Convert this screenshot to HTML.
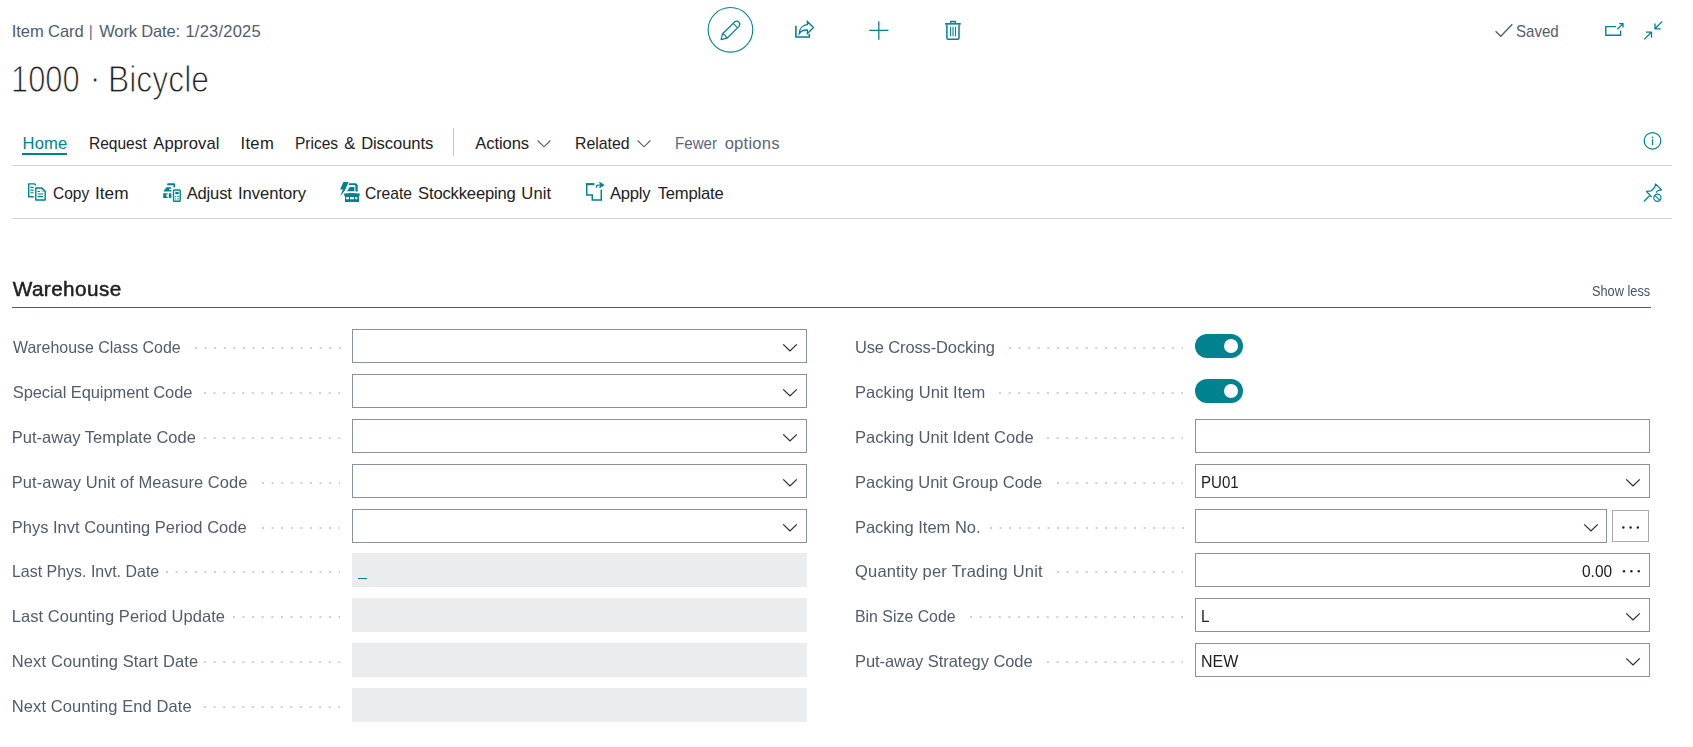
<!DOCTYPE html>
<html><head><meta charset="utf-8"><title>Item Card</title>
<style>
html,body{margin:0;padding:0;background:#fff;}
body{width:1693px;height:747px;position:relative;overflow:hidden;font-family:"Liberation Sans",sans-serif;}
.t{position:absolute;white-space:pre;line-height:1;font-family:"Liberation Sans",sans-serif;}
.a{position:absolute;}
.gl{position:absolute;left:0;top:0;width:1693px;height:747px;will-change:transform;}
.ln{position:absolute;height:1px;}
.inp{position:absolute;height:34px;box-sizing:border-box;border:1px solid #8a92a1;background:#fff;}
.ro{position:absolute;height:34px;background:#ebecee;}
.btn{position:absolute;width:37px;height:32px;box-sizing:border-box;border:1px solid #a6a8ab;background:#fff;}
.tog{position:absolute;width:48px;height:24px;border-radius:12px;background:#00838f;}
.tog i{position:absolute;left:29px;top:5px;width:14px;height:14px;border-radius:50%;background:#fff;}
.dots{position:absolute;height:2px;background-image:radial-gradient(circle at 1px 1px,#cbcfd4 1.05px,rgba(203,207,212,0) 1.5px);background-size:9.6px 2px;background-repeat:repeat-x;}
</style></head><body>
<div class="a" style="left:22px;top:153px;width:45px;height:2px;background:#00838f"></div>
<div class="ln" style="left:12px;top:165px;width:1660px;background:#d0d3d7"></div>
<div class="ln" style="left:12px;top:218px;width:1660px;background:#d1d4d7"></div>
<div class="a" style="left:453px;top:128px;width:1px;height:28px;background:#c4c7cb"></div>
<div class="ln" style="left:12px;top:307px;width:1639px;background:#505c6d"></div>
<div class="dots" style="left:194.50px;top:347.00px;width:146.00px"></div>
<div class="dots" style="left:204.10px;top:392.00px;width:136.40px"></div>
<div class="dots" style="left:204.10px;top:437.00px;width:136.40px"></div>
<div class="dots" style="left:261.70px;top:482.00px;width:78.80px"></div>
<div class="dots" style="left:261.70px;top:527.00px;width:78.80px"></div>
<div class="dots" style="left:165.70px;top:571.00px;width:174.80px"></div>
<div class="dots" style="left:232.90px;top:616.00px;width:107.60px"></div>
<div class="dots" style="left:204.10px;top:661.00px;width:136.40px"></div>
<div class="dots" style="left:204.10px;top:706.00px;width:136.40px"></div>
<div class="dots" style="left:1008.70px;top:347.00px;width:174.80px"></div>
<div class="dots" style="left:999.10px;top:392.00px;width:184.40px"></div>
<div class="dots" style="left:1047.10px;top:437.00px;width:136.40px"></div>
<div class="dots" style="left:1056.70px;top:482.00px;width:126.80px"></div>
<div class="dots" style="left:989.50px;top:527.00px;width:194.00px"></div>
<div class="dots" style="left:1056.70px;top:571.00px;width:126.80px"></div>
<div class="dots" style="left:970.30px;top:616.00px;width:213.20px"></div>
<div class="dots" style="left:1047.10px;top:661.00px;width:136.40px"></div>
<div class="inp" style="left:352px;top:329px;width:455px"></div>
<svg class="a" style="left:782.2px;top:343.2px" width="16" height="10" viewBox="0 0 16 10"><path d="M1.2 1.4 L8 8 L14.8 1.4" fill="none" stroke="#2b2b2b" stroke-width="1.25"/></svg>
<div class="inp" style="left:352px;top:374px;width:455px"></div>
<svg class="a" style="left:782.2px;top:388.2px" width="16" height="10" viewBox="0 0 16 10"><path d="M1.2 1.4 L8 8 L14.8 1.4" fill="none" stroke="#2b2b2b" stroke-width="1.25"/></svg>
<div class="inp" style="left:352px;top:419px;width:455px"></div>
<svg class="a" style="left:782.2px;top:433.2px" width="16" height="10" viewBox="0 0 16 10"><path d="M1.2 1.4 L8 8 L14.8 1.4" fill="none" stroke="#2b2b2b" stroke-width="1.25"/></svg>
<div class="inp" style="left:352px;top:464px;width:455px"></div>
<svg class="a" style="left:782.2px;top:478.2px" width="16" height="10" viewBox="0 0 16 10"><path d="M1.2 1.4 L8 8 L14.8 1.4" fill="none" stroke="#2b2b2b" stroke-width="1.25"/></svg>
<div class="inp" style="left:352px;top:509px;width:455px"></div>
<svg class="a" style="left:782.2px;top:523.2px" width="16" height="10" viewBox="0 0 16 10"><path d="M1.2 1.4 L8 8 L14.8 1.4" fill="none" stroke="#2b2b2b" stroke-width="1.25"/></svg>
<div class="ro" style="left:352px;top:553px;width:455px"></div>
<div class="ro" style="left:352px;top:598px;width:455px"></div>
<div class="ro" style="left:352px;top:643px;width:455px"></div>
<div class="ro" style="left:352px;top:688px;width:455px"></div>
<div class="a" style="left:357.8px;top:577.6px;width:9.3px;height:1.4px;background:#00838f"></div>
<div class="tog" style="left:1195px;top:334px"><i></i></div>
<div class="tog" style="left:1195px;top:379px"><i></i></div>
<div class="inp" style="left:1195px;top:419px;width:455px"></div>
<div class="inp" style="left:1195px;top:464px;width:455px"></div>
<svg class="a" style="left:1625.1px;top:478.2px" width="16" height="10" viewBox="0 0 16 10"><path d="M1.2 1.4 L8 8 L14.8 1.4" fill="none" stroke="#2b2b2b" stroke-width="1.25"/></svg>
<div class="inp" style="left:1195px;top:509px;width:412px"></div>
<svg class="a" style="left:1583.1px;top:523.2px" width="16" height="10" viewBox="0 0 16 10"><path d="M1.2 1.4 L8 8 L14.8 1.4" fill="none" stroke="#2b2b2b" stroke-width="1.25"/></svg>
<div class="btn" style="left:1612px;top:510px"></div>
<svg class="a" style="left:1618px;top:523px" width="24" height="8" viewBox="0 0 24 8"><circle cx="5.35" cy="4.50" r="1.2" fill="#222"/><circle cx="12.60" cy="4.50" r="1.2" fill="#222"/><circle cx="19.85" cy="4.50" r="1.2" fill="#222"/></svg>
<div class="inp" style="left:1195px;top:553px;width:455px"></div>
<svg class="a" style="left:1619px;top:567px" width="24" height="8" viewBox="0 0 24 8"><circle cx="5.00" cy="4.30" r="1.2" fill="#222"/><circle cx="12.40" cy="4.30" r="1.2" fill="#222"/><circle cx="19.80" cy="4.30" r="1.2" fill="#222"/></svg>
<div class="inp" style="left:1195px;top:598px;width:455px"></div>
<svg class="a" style="left:1625.1px;top:612.2px" width="16" height="10" viewBox="0 0 16 10"><path d="M1.2 1.4 L8 8 L14.8 1.4" fill="none" stroke="#2b2b2b" stroke-width="1.25"/></svg>
<div class="inp" style="left:1195px;top:643px;width:455px"></div>
<svg class="a" style="left:1625.1px;top:657.2px" width="16" height="10" viewBox="0 0 16 10"><path d="M1.2 1.4 L8 8 L14.8 1.4" fill="none" stroke="#2b2b2b" stroke-width="1.25"/></svg>
<span class="t" style="left:11.75px;top:23.00px;font-size:16.5px;letter-spacing:-0.064px;color:#505c6d;">Item Card</span>
<span class="t" style="left:89.12px;top:23.00px;font-size:16.5px;color:#505c6d;transform-origin:0 0;transform:scaleX(0.8250);">|</span>
<span class="t" style="left:99.25px;top:23.00px;font-size:16.5px;letter-spacing:-0.154px;color:#505c6d;">Work Date:</span>
<span class="t" style="left:185.45px;top:23.00px;font-size:16.5px;letter-spacing:0.228px;color:#505c6d;">1/23/2025</span>
<span class="t" style="left:11.06px;top:62.00px;font-size:36.6px;color:#212121;transform-origin:0 0;transform:scaleX(0.8439);-webkit-text-stroke:1.0px #fff;">1000</span>
<span class="t" style="left:88.95px;top:60.00px;font-size:36.6px;color:#212121;transform-origin:0 0;transform:scaleX(1.0000);-webkit-text-stroke:1.0px #fff;">·</span>
<span class="t" style="left:107.73px;top:62.00px;font-size:36.6px;color:#212121;transform-origin:0 0;transform:scaleX(0.8721);-webkit-text-stroke:1.0px #fff;">Bicycle</span>
<span class="t" style="left:22.55px;top:136.00px;font-size:16.6px;letter-spacing:0.138px;color:#00838f;">Home</span>
<span class="t" style="left:88.71px;top:136.00px;font-size:16.6px;color:#212121;transform-origin:0 0;transform:scaleX(0.9355);">Request</span>
<span class="t" style="left:153.35px;top:136.00px;font-size:16.6px;letter-spacing:0.078px;color:#212121;">Approval</span>
<span class="t" style="left:240.55px;top:136.00px;font-size:16.6px;letter-spacing:0.300px;color:#212121;">Item</span>
<span class="t" style="left:295.02px;top:136.00px;font-size:16.6px;color:#212121;transform-origin:0 0;transform:scaleX(0.9340);">Prices</span>
<span class="t" style="left:344.25px;top:136.00px;font-size:16.6px;letter-spacing:0.000px;color:#212121;">&amp;</span>
<span class="t" style="left:361.15px;top:136.00px;font-size:16.6px;letter-spacing:-0.101px;color:#212121;">Discounts</span>
<span class="t" style="left:475.35px;top:136.00px;font-size:16.6px;letter-spacing:-0.111px;color:#212121;">Actions</span>
<span class="t" style="left:574.79px;top:136.00px;font-size:16.6px;color:#212121;transform-origin:0 0;transform:scaleX(0.9550);">Related</span>
<span class="t" style="left:675.24px;top:136.00px;font-size:16.6px;color:#5c6677;transform-origin:0 0;transform:scaleX(0.9116);">Fewer</span>
<span class="t" style="left:724.65px;top:136.00px;font-size:16.6px;letter-spacing:0.223px;color:#5c6677;">options</span>
<span class="t" style="left:53.25px;top:186.00px;font-size:16.6px;color:#212121;transform-origin:0 0;transform:scaleX(0.9343);">Copy</span>
<span class="t" style="left:95.21px;top:186.00px;font-size:16.6px;color:#212121;transform-origin:0 0;transform:scaleX(1.0394);">Item</span>
<span class="t" style="left:186.65px;top:186.00px;font-size:16.6px;letter-spacing:-0.172px;color:#212121;">Adjust</span>
<span class="t" style="left:237.95px;top:186.00px;font-size:16.6px;letter-spacing:-0.013px;color:#212121;">Inventory</span>
<span class="t" style="left:365.45px;top:186.00px;font-size:16.6px;color:#212121;transform-origin:0 0;transform:scaleX(0.9430);">Create</span>
<span class="t" style="left:418.05px;top:186.00px;font-size:16.6px;letter-spacing:-0.168px;color:#212121;">Stockkeeping</span>
<span class="t" style="left:521.35px;top:186.00px;font-size:16.6px;letter-spacing:0.050px;color:#212121;">Unit</span>
<span class="t" style="left:609.95px;top:186.00px;font-size:16.6px;letter-spacing:-0.240px;color:#212121;">Apply</span>
<span class="t" style="left:657.65px;top:186.00px;font-size:16.6px;letter-spacing:-0.193px;color:#212121;">Template</span>
<span class="t" style="left:1516.35px;top:24.00px;font-size:16.6px;color:#505c6d;transform-origin:0 0;transform:scaleX(0.9088);">Saved</span>
<div class="gl">
<span class="t" style="left:12.75px;top:279.00px;font-size:20.7px;letter-spacing:0.429px;color:#212121;-webkit-text-stroke:0.5px #212121;">Warehouse</span>
<span class="t" style="left:1592.45px;top:285.00px;font-size:13.9px;color:#44516a;transform-origin:0 0;transform:scaleX(0.9193);">Show less</span>
<span class="t" style="left:12.75px;top:339.00px;font-size:16.5px;color:#505c6d;transform-origin:0 0;transform:scaleX(0.9654);">Warehouse Class Code</span>
<span class="t" style="left:12.75px;top:384.00px;font-size:16.5px;letter-spacing:-0.090px;color:#505c6d;">Special Equipment Code</span>
<span class="t" style="left:11.75px;top:429.00px;font-size:16.5px;letter-spacing:0.004px;color:#505c6d;">Put-away Template Code</span>
<span class="t" style="left:11.75px;top:474.00px;font-size:16.5px;letter-spacing:0.067px;color:#505c6d;">Put-away Unit of Measure Code</span>
<span class="t" style="left:11.75px;top:519.00px;font-size:16.5px;letter-spacing:0.001px;color:#505c6d;">Phys Invt Counting Period Code</span>
<span class="t" style="left:11.78px;top:563.00px;font-size:16.5px;color:#505c6d;transform-origin:0 0;transform:scaleX(0.9668);">Last Phys. Invt. Date</span>
<span class="t" style="left:11.75px;top:608.00px;font-size:16.5px;letter-spacing:0.051px;color:#505c6d;">Last Counting Period Update</span>
<span class="t" style="left:11.75px;top:653.00px;font-size:16.5px;letter-spacing:0.130px;color:#505c6d;">Next Counting Start Date</span>
<span class="t" style="left:11.75px;top:698.00px;font-size:16.5px;letter-spacing:0.095px;color:#505c6d;">Next Counting End Date</span>
<span class="t" style="left:854.95px;top:339.00px;font-size:16.5px;letter-spacing:-0.137px;color:#505c6d;">Use Cross-Docking</span>
<span class="t" style="left:854.95px;top:384.00px;font-size:16.5px;letter-spacing:0.068px;color:#505c6d;">Packing Unit Item</span>
<span class="t" style="left:854.95px;top:429.00px;font-size:16.5px;letter-spacing:0.036px;color:#505c6d;">Packing Unit Ident Code</span>
<span class="t" style="left:854.95px;top:474.00px;font-size:16.5px;letter-spacing:0.006px;color:#505c6d;">Packing Unit Group Code</span>
<span class="t" style="left:854.95px;top:519.00px;font-size:16.5px;letter-spacing:-0.000px;color:#505c6d;">Packing Item No.</span>
<span class="t" style="left:855.05px;top:563.00px;font-size:16.5px;letter-spacing:0.171px;color:#505c6d;">Quantity per Trading Unit</span>
<span class="t" style="left:854.99px;top:608.00px;font-size:16.5px;color:#505c6d;transform-origin:0 0;transform:scaleX(0.9620);">Bin Size Code</span>
<span class="t" style="left:854.95px;top:653.00px;font-size:16.5px;letter-spacing:-0.053px;color:#505c6d;">Put-away Strategy Code</span>
<span class="t" style="left:1201.24px;top:475.00px;font-size:16.6px;color:#212121;transform-origin:0 0;transform:scaleX(0.9099);">PU01</span>
<span class="t" style="left:1581.85px;top:564.00px;font-size:16.6px;color:#212121;transform-origin:0 0;transform:scaleX(0.9340);">0.00</span>
<span class="t" style="left:1200.63px;top:609.00px;font-size:16.6px;color:#212121;transform-origin:0 0;transform:scaleX(0.9188);">L</span>
<span class="t" style="left:1200.99px;top:654.00px;font-size:16.6px;color:#212121;transform-origin:0 0;transform:scaleX(0.9632);">NEW</span>
</div>
<svg class="a" style="left:0;top:0" width="1693" height="230" viewBox="0 0 1693 230" fill="none" stroke="#00838f" stroke-width="1.2">
<!-- edit circle + pencil -->
<circle cx="730.45" cy="29.8" r="22.3" stroke-width="1.1"/>
<path d="M721.1 39.7 L722.6 33.7 L734.8 21.8 Q736.9 20.1 738.95 22.1 Q740.8 24.3 738.9 26.4 L727 38.2 Z M733.2 23.4 L737.6 27.8 M722.6 33.7 Q725.6 34.8 727 38.2" stroke-linejoin="round"/>
<!-- share -->
<path d="M795.9 25.8 V36.95 H809.3 V33.9" stroke-width="1.6"/>
<path d="M807.4 21.4 L813.5 27.5 L807.4 33.6 V30 C803.6 29.7 801 31 799.3 33.5 C799.5 28.6 802.6 25 807.4 24.7 Z" stroke-linejoin="miter" stroke-width="1.35"/>
<!-- plus -->
<path d="M878.8 21.2 V39.7 M869.2 30.45 H888.4" stroke-width="1.3"/>
<!-- trash -->
<path d="M945 23.85 H960.8" stroke-width="1.6"/>
<path d="M950.7 23 V21.5 H955.3 V23" stroke-width="1.3"/>
<path d="M946.9 24.5 V38 Q946.9 39.2 948.1 39.2 H957.8 Q959 39.2 959 38 V24.5" stroke-width="1.5"/>
<path d="M950.6 26.8 V36.3 M953.05 26.8 V36.3 M955.5 26.8 V36.3" stroke-width="1.1"/>
<!-- check (saved) -->
<path d="M1495.6 31.2 L1500.8 36.3 L1512.3 24.3" stroke="#505c6d" stroke-width="1.3"/>
<!-- popout -->
<path d="M1616.2 26.6 H1605.8 V35.3 H1620.6 V30.6" stroke-width="1.4"/>
<path d="M1617.4 29.2 L1623 23.6 M1619.2 23.6 H1623 V27.4" stroke-width="1.3"/>
<!-- collapse -->
<path d="M1662.3 21.4 L1655 28.7 M1655 23.4 V28.8 H1660.6" stroke-width="1.3"/>
<path d="M1644.2 39.4 L1651.4 32.2 M1646 32.1 H1651.5 V37.7" stroke-width="1.3"/>
<!-- info -->
<circle cx="1652.5" cy="140.8" r="8.3" stroke-width="1.25"/>
<path d="M1652.5 139.2 V145.1" stroke-width="1.3"/>
<circle cx="1652.5" cy="137.3" r="0.85" fill="#00838f" stroke="none"/>
<!-- pin -->
<path d="M1651.7 197 L1646.4 191.4 L1651.3 190.8 L1654.8 187.3 L1655.5 184 L1661.6 189.9 L1658.3 190.4 L1656 192.6" stroke-width="1.25" stroke-linejoin="round"/>
<path d="M1649.6 195.7 L1643.8 201.5" stroke-width="1.25"/>
<circle cx="1657.4" cy="197.8" r="3.6" stroke-width="1.2"/>
<path d="M1654.9 195.3 L1659.9 200.3" stroke-width="1.2"/>
<!-- nav chevrons -->
<path d="M537.6 140.5 L544 146.8 L550.4 140.5" stroke="#505c6d" stroke-width="1.1"/>
<path d="M637.6 140.5 L644 146.8 L650.4 140.5" stroke="#505c6d" stroke-width="1.1"/>

<!-- copy item -->
<g stroke-width="1.4" stroke-linejoin="round">
<path d="M33.8 196.8 H28.7 V183.9 H34.6 L36 185.3"/>
<path d="M42 188 H35.8 V200 H45.2 V191.2 Z"/>
</g>
<path d="M30.4 187.4 H33.6 M30.4 190.1 H33.6 M30.4 192.7 H33.6 M37.6 191.5 H40 M37.6 194 H43.2 M37.6 196.6 H43.2" stroke-width="1.1"/>
<path d="M42 188 V191.2 H45.2" stroke-width="0.9" stroke-opacity="0.6"/>
<!-- adjust inventory -->
<rect x="173.5" y="190" width="6.7" height="11.2" rx="0.8" stroke-width="1.4"/>
<g fill="#00838f" stroke="none">
<rect x="175.2" y="192.1" width="3.6" height="2.1" rx="0.6"/>
<rect x="175" y="196" width="1.2" height="1.1"/><rect x="177" y="196" width="2" height="1.1" opacity="0.75"/>
<rect x="175" y="198.2" width="1.2" height="1.3" opacity="0.8"/><rect x="177" y="198.2" width="2" height="1.3" opacity="0.6"/>
<path d="M167.6 183.3 H174.2 Q175.2 183.3 175.2 184.4 V187.6 H173.5 V185.6 L172.6 185.3 H166.8 Z"/>
<path d="M166.6 187.2 H171.2 V188.8 H169 V190 H171.4 V191.6 H163.2 Z"/>
<path d="M163.2 193.3 H167.6 V194.6 H166 V196.6 H167.6 V198 H163.2 Z"/>
<path d="M168.8 193.3 H171.4 V198 H168.8 Z"/>
</g>
<!-- create sku -->
<g fill="#00838f" stroke="none">
<path d="M343.4 182 H348.7 L345.3 189.6 L344.2 191.6 L340.2 195.9 L342.9 189.4 H340.1 Z"/>
<path d="M349.2 183.3 H356 L357.7 185 V191.6 H355.4 V186 L354.4 184.9 H348.5 Z"/>
<path d="M349.8 187 H354.4 V191.3 H346.9 Z"/>
<path d="M344.1 193.6 L351.8 192.9 L359.7 193.6 V195.7 H359 V201.9 H345 V195.7 H344.1 Z M346.2 197.1 V199.3 H348.8 V197.1 Z M350.1 197.1 V199.3 H353.9 V197.1 Z M355.3 197.1 V199.3 H357.3 V197.1 Z" fill-rule="evenodd"/>
</g>
<!-- apply template -->
<path d="M594.3 184.3 H586.7 V194.9 H592.3 V200 H601.3 V189.6" stroke-width="1.5"/>
<path d="M586 184.2 H594.3" stroke-width="2"/>
<path d="M596.4 187.8 V186.6 Q596.4 185.1 598 185.1 H601.5" stroke-width="1.4"/>
<path d="M599.6 182.2 L604.1 185.1 L599.6 187.8 L600.6 185.1 Z" fill="#00838f" stroke-width="0.8" stroke-linejoin="round"/>
</svg>

</body></html>
